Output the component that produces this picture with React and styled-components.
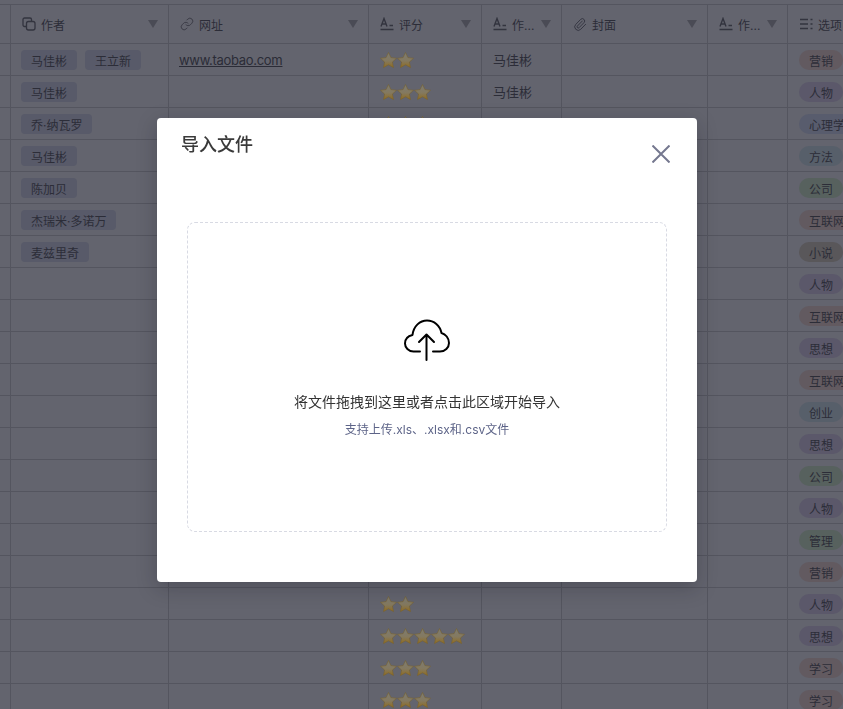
import React from "react";
import styled, { createGlobalStyle } from "styled-components";
import { Link, Paperclip } from "lucide-react";

const Global = createGlobalStyle`
  html, body { margin: 0; padding: 0; height: 100%; overflow: hidden; background: #63646e; }
  #root { height: 100%; }
  * { box-sizing: border-box; }
  body { font-family: Inter, "Noto Sans CJK SC", "Liberation Sans", sans-serif; }
`;

const Page = styled.div`
  width: 843px;
  height: 709px;
  overflow: hidden;
  padding-top: 4px;
  background: #63646e;
  color: #2c2d38;
`;
const Table = styled.div`
  display: flex;
  flex-direction: column;
  width: max-content;
  border-top: 1px solid #54555f;
`;
const Row = styled.div`
  display: flex;
  height: ${(p) => (p.$header ? "39px" : "32px")};
  border-bottom: 1px solid #54555f;
`;
const Cell = styled.div`
  display: flex;
  align-items: center;
  flex: none;
  width: ${(p) => p.$w}px;
  padding: 0 ${(p) => p.$pad ?? 10}px;
  gap: 8px;
  border-right: 1px solid #54555f;
  font-size: 13px;
  white-space: nowrap;
`;
const HeadIcon = styled.span`
  display: flex;
  flex: none;
  width: 14px;
  height: 14px;
  color: #33343f;
  margin-left: 1px;
`;
const HeadLabel = styled.span`
  flex: 1;
  min-width: 0;
  font-size: 12px;
  color: #2c2d38;
  margin-left: -3px;
`;
const Caret = styled.svg`
  flex: none;
  width: 10px;
  height: 8px;
  margin-left: -3px;
  fill: #4a4b55;
`;
const PersonTag = styled.span`
  display: inline-flex;
  align-items: center;
  height: 20px;
  margin-top: 1px;
  padding: 0 10px;
  border-radius: 4px;
  background: #585a69;
  font-size: 12px;
  color: #2c2d38;
`;
const Pill = styled.span`
  display: inline-flex;
  align-items: center;
  flex: none;
  height: 20px;
  margin-top: 1px;
  padding: 0 10px;
  border-radius: 10px;
  background: ${(p) => p.$bg};
  font-size: 12px;
  color: #2c2d38;
`;
const SiteLink = styled.a`
  font-size: 13px;
  letter-spacing: -0.3px;
  color: #2b2c37;
  text-decoration: underline;
`;
const Stars = styled.span`
  display: flex;
  margin-top: 1px;
`;
const Star = styled.svg`
  width: 17px;
  height: 17px;
  flex: none;
`;
const Scrim = styled.div`
  position: fixed;
  inset: 0;
  display: flex;
  align-items: flex-start;
  padding: 118px 0 0 157px;
`;
const Modal = styled.div`
  width: 540px;
  height: 464px;
  background: #fff;
  border-radius: 4px;
  box-shadow: 0 6px 20px rgba(20, 20, 30, 0.25);
  padding: 0 30px;
`;
const ModalHead = styled.div`
  display: flex;
  justify-content: space-between;
  height: 104px;
  margin: 0 -3px 0 -6px;
  padding-top: 15px;
`;
const Title = styled.h2`
  margin: 0;
  font-size: 18px;
  line-height: 24px;
  font-weight: 500;
  color: #3a3a3a;
`;
const Close = styled.button`
  display: flex;
  width: 18px;
  height: 18px;
  margin-top: 12px;
  padding: 0;
  border: 0;
  background: none;
  color: #75788f;
`;
const Drop = styled.div`
  display: flex;
  flex-direction: column;
  align-items: center;
  height: 310px;
  padding-top: 96px;
  border: 1px dashed #d8dae3;
  border-radius: 8px;
`;
const Cloud = styled.svg`
  width: 46px;
  height: 42px;
  flex: none;
`;
const DropText = styled.p`
  margin: 30px 0 0;
  font-size: 14px;
  line-height: 22px;
  color: #333;
`;
const DropHint = styled.p`
  margin: 8px 0 0;
  font-size: 12px;
  line-height: 18px;
  color: #5d6488;
`;

const RED = "#625a60", PURPLE = "#5b586a", BLUE = "#585c6d", TEAL = "#575f6a", GREEN = "#57615e", GRAY = "#59575a";
const authors = [["马佳彬", "王立新"], ["马佳彬"], ["乔·纳瓦罗"], ["马佳彬"], ["陈加贝"], ["杰瑞米·多诺万"], ["麦兹里奇"]];
const options = [
  ["营销", RED], ["人物", PURPLE], ["心理学", BLUE], ["方法", TEAL], ["公司", GREEN], ["互联网", RED], ["小说", GRAY],
  ["人物", PURPLE], ["互联网", RED], ["思想", PURPLE], ["互联网", RED], ["创业", TEAL], ["思想", PURPLE], ["公司", GREEN],
  ["人物", PURPLE], ["管理", GREEN], ["营销", RED], ["人物", PURPLE], ["思想", PURPLE], ["学习", RED], ["学习", RED],
];
const ratings = { 0: 2, 1: 3, 2: 3, 17: 2, 18: 5, 19: 3, 20: 3 };
const writers = { 0: "马佳彬", 1: "马佳彬" };
const W = [11, 158, 200, 113, 80, 146, 80, 120];

const Overlap = () => (
  <svg width="14" height="14" viewBox="0 0 14 14" fill="none" stroke="currentColor" strokeWidth="1.3">
    <path d="M4 9.5H2.5A1.5 1.5 0 0 1 1 8V2.500A1.500 1.500 0 0 1 2.500 1H8a1.500 1.500 0 0 1 1.500 1.500V4" />
    <rect x="4.5" y="4.5" width="8.5" height="8.5" rx="2" />
  </svg>
);
const TextField = () => (
  <svg width="14" height="14" viewBox="0 0 14 14" fill="none" stroke="currentColor" strokeWidth="1.4">
    <path d="M1 9.5 4 1.5l3 8M2 7h4" />
    <path d="M9.5 8.5H13M0.5 12.5H13.5" />
  </svg>
);
const ListField = () => (
  <svg width="14" height="14" viewBox="0 0 14 14" fill="none" stroke="currentColor" strokeWidth="1.4">
    <path d="M1 2.5h8M1 7h8M1 11.5h8M11.5 2.5h2M11.5 7h2M11.5 11.5h2" />
  </svg>
);
const HeadCell = ({ w, icon, label, caret = true }) => (
  <Cell $w={w}>
    <HeadIcon>{icon}</HeadIcon>
    <HeadLabel>{label}</HeadLabel>
    {caret && <Caret viewBox="0 0 10 8"><path d="M0 0h10L5 8z" /></Caret>}
  </Cell>
);
const StarIcon = () => (
  <Star viewBox="0 0 17 17">
    <defs>
      <linearGradient id="starFill" x1="0" y1="0" x2="0" y2="1">
        <stop offset="0" stopColor="#7d7c74" />
        <stop offset="0.55" stopColor="#84795f" />
        <stop offset="1" stopColor="#8f6c20" />
      </linearGradient>
    </defs>
    <path
      d="M8.5.5l2.400 5.100 5.600.7-4.100 3.800 1.100 5.500-5-2.800-5 2.800 1.100-5.500L.5 6.300l5.600-.7z"
      fill="url(#starFill)"
      stroke="#7a6124"
      strokeWidth="0.5"
      strokeLinejoin="round"
    />
  </Star>
);

export default function App() {
  return (
    <Page>
      <Global />
      <Table>
        <Row $header>
          <Cell $w={W[0]} $pad={0} />
          <HeadCell w={W[1]} icon={<Overlap />} label="作者" />
          <HeadCell w={W[2]} icon={<Link size={14} strokeWidth={1.4} />} label="网址" />
          <HeadCell w={W[3]} icon={<TextField />} label="评分" />
          <HeadCell w={W[4]} icon={<TextField />} label="作..." />
          <HeadCell w={W[5]} icon={<Paperclip size={15} strokeWidth={1.6} />} label="封面" />
          <HeadCell w={W[6]} icon={<TextField />} label="作..." />
          <HeadCell w={W[7]} icon={<ListField />} label="选项" caret={false} />
        </Row>
        {options.map(([opt, bg], i) => (
          <Row key={i}>
            <Cell $w={W[0]} $pad={0} />
            <Cell $w={W[1]}>
              {(authors[i] || []).map((a) => <PersonTag key={a}>{a}</PersonTag>)}
            </Cell>
            <Cell $w={W[2]}>
              {i === 0 && <SiteLink>www.taobao.com</SiteLink>}
            </Cell>
            <Cell $w={W[3]} $pad={11}>
              {ratings[i] && (
                <Stars>
                  {Array.from({ length: ratings[i] }, (_, k) => <StarIcon key={k} />)}
                </Stars>
              )}
            </Cell>
            <Cell $w={W[4]} $pad={11}>{writers[i]}</Cell>
            <Cell $w={W[5]} />
            <Cell $w={W[6]} />
            <Cell $w={W[7]} $pad={11}>
              <Pill $bg={bg}>{opt}</Pill>
            </Cell>
          </Row>
        ))}
      </Table>
      <Scrim>
        <Modal>
          <ModalHead>
            <Title>导入文件</Title>
            <Close aria-label="关闭">
              <svg width="18" height="18" viewBox="0 0 18 18" fill="none" stroke="currentColor" strokeWidth="2">
                <path d="M.5.5l17 17M17.5.5l-17 17" />
              </svg>
            </Close>
          </ModalHead>
          <Drop>
            <Cloud viewBox="0 0 46 42" fill="none" stroke="#000" strokeWidth="2" strokeLinecap="round" strokeLinejoin="round">
              <path d="M16 32.5H9.5C4.5 32.5 1 28.5 1 24.5 1 20 4 17 8.5 16 9.5 7 16 1.5 23 1.5c7 0 13 5 14.5 12.5 4 1 7.5 5 7.5 10 0 4.5-4 8.5-9 8.5h-7" />
              <path d="M22.5 41V16M15 23l7.5-7.5L30 23" />
            </Cloud>
            <DropText>将文件拖拽到这里或者点击此区域开始导入</DropText>
            <DropHint>支持上传.xls、.xlsx和.csv文件</DropHint>
          </Drop>
        </Modal>
      </Scrim>
    </Page>
  );
}
